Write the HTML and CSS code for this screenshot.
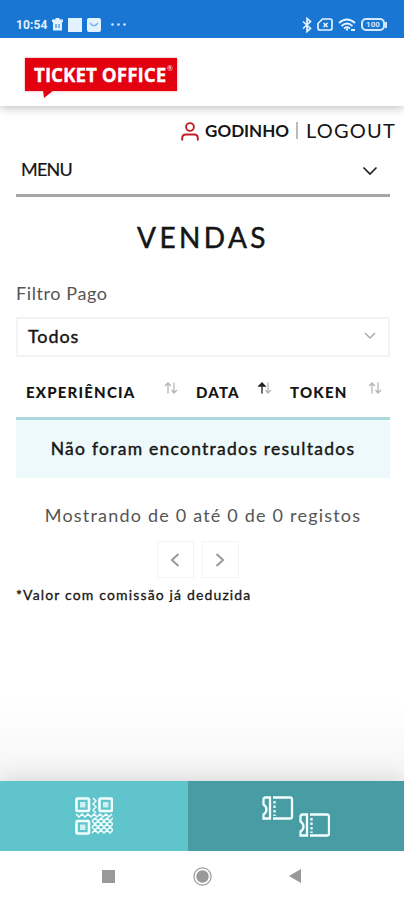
FILE: index.html
```html
<!DOCTYPE html>
<html lang="pt">
<head>
    <meta charset="UTF-8">
    <meta name="viewport" content="width=device-width, initial-scale=1.0">
    <title>Ticket Office - Vendas</title>
    <link rel="stylesheet" href="styles.css">
</head>
<body>
    <div class="status-bar">
        <span class="clock">10:54</span>
        <svg class="trash" width="11" height="13" viewBox="0 0 11 13"><path d="M3.5 0h4v1.5H11V4H0V1.5h3.5z M1 4h9V12.500H1z" fill="#e3f2ff"/><path d="M4 6v4M7 6v4" stroke="#1976d2" stroke-width="1"/></svg>
        <span class="square"></span>
        <svg class="mail" width="14" height="14" viewBox="0 0 14 14"><rect width="14" height="14" rx="2" fill="#e3f2ff"/><path d="M3 5q4 5.500 8 0" fill="none" stroke="#7fb4ec" stroke-width="1.500"/></svg>
        <svg class="dots" width="15" height="3" viewBox="0 0 15 3" fill="#d3e8ff"><circle cx="1.500" cy="1.500" r="1.300"/><circle cx="7.500" cy="1.500" r="1.300"/><circle cx="13.500" cy="1.500" r="1.300"/></svg>
        <div class="status-icons">
            <svg width="10" height="16" viewBox="0 0 10 16" fill="none" stroke="#e3f2ff" stroke-width="1.700"><path d="M1 4.500l7.500 7L5 14.500v-13l3.500 3L1 11.500"/></svg>
            <svg width="16" height="13" viewBox="0 0 16 13" fill="none" stroke="#e3f2ff" stroke-width="1.700"><path d="M5.500 1H13q2 0 2 2v7q0 2-2 2H3q-2 0-2-2V5.500z"/><path d="M6.500 5l4 4M10.500 5l-4 4"/></svg>
            <svg width="18" height="14" viewBox="0 0 18 14" fill="none" stroke="#e3f2ff" stroke-width="1.800"><path d="M1 5q8-7 16 0M3.500 8q5.500-5 11 0M6 10.500q3-2.500 6 0"/><path d="M8 11.500h2M13 12h4"/></svg>
            <div class="battery-wrap">
                <span class="battery">100</span>
                <span class="battery-tip"></span>
            </div>
        </div>
    </div>

    <header class="header">
        <div class="logo">
            <span class="logo-text">TICKET OFFICE</span><span class="reg">®</span>
            <svg class="logo-tail" width="11" height="9" viewBox="0 0 11 9"><path d="M0 0h11L1 8z" fill="#e3000f"/></svg>
        </div>
    </header>

    <main class="content">
        <div class="user">
            <svg class="user-icon" width="18" height="19" viewBox="0 0 18 19" fill="none" stroke="#bf2026" stroke-width="1.900"><circle cx="9" cy="5" r="3.900"/><path d="M1.200 18.500v-2.300q0-3.700 3.700-3.700h8.200q3.700 0 3.700 3.700v2.300"/></svg>
            <span class="user-name">GODINHO</span>
            <span class="divider"></span>
            <span class="logout">LOGOUT</span>
        </div>

        <div class="menu">
            <span>MENU</span>
            <svg width="16" height="10" viewBox="0 0 16 10" fill="none" stroke="#222" stroke-width="1.700"><path d="M1.500 1.500L8 8l6.500-6.500"/></svg>
        </div>

        <h1>VENDAS</h1>

        <div class="filter-label">Filtro Pago</div>
        <div class="select">
            <span>Todos</span>
            <svg width="12" height="8" viewBox="0 0 12 8" fill="none" stroke="#aaa" stroke-width="1.500"><path d="M1 1l5 5 5-5"/></svg>
        </div>

        <div class="table-head">
            <div class="th experience"><span>EXPERIÊNCIA</span>
                <svg class="sort" width="14" height="12" viewBox="0 0 14 12"><path d="M4 11.500V1M1 4l3-3 3 3M10 .500V11M7.500 8l2.500 3L13 8"/></svg>
            </div>
            <div class="th date"><span>DATA</span>
                <svg class="sort" width="14" height="12" viewBox="0 0 14 12"><path class="active" d="M4 11.500V1M1 4l3-3 3 3z"/><path d="M10 .500V11M7.500 8l2.500 3L13 8"/></svg>
            </div>
            <div class="th token"><span>TOKEN</span>
                <svg class="sort" width="14" height="12" viewBox="0 0 14 12"><path d="M4 11.500V1M1 4l3-3 3 3M10 .500V11M7.500 8l2.500 3L13 8"/></svg>
            </div>
        </div>
        <div class="empty">Não foram encontrados resultados</div>

        <div class="info">Mostrando de 0 até 0 de 0 registos</div>
        <div class="pagination">
            <div class="page-btn"><svg width="10" height="14" viewBox="0 0 10 14"><path d="M8.500 1L2 7l6.500 6"/></svg></div>
            <div class="page-btn"><svg width="10" height="14" viewBox="0 0 10 14"><path d="M1.500 1L8 7l-6.500 6"/></svg></div>
        </div>
        <div class="note">*Valor com comissão já deduzida</div>
    </main>

    <nav class="tabs">
        <div class="tab tab-qr">
            <svg width="38" height="38" viewBox="0 0 38 38" fill="none" stroke="#f1ffff">
                <g stroke-width="2.600">
                    <rect x="1.500" y="1.500" width="12.500" height="12.500" rx="1"/>
                    <rect x="24.500" y="1.500" width="12.500" height="12.500" rx="1"/>
                    <rect x="1.500" y="24" width="12.500" height="12.500" rx="1"/>
                </g>
                <g fill="#c9f0f2" stroke="none">
                    <rect x="5" y="5" width="5.500" height="5.500"/>
                    <rect x="28" y="5" width="5.500" height="5.500"/>
                    <rect x="5" y="27.500" width="5.500" height="5.500"/>
                </g>
                <g stroke-width="1.500">
                    <path d="M18 1l3 3-3 3 3 3-3 3 3 3M1 17l3 3 3-3 3 3 3-3 3 3 3-3 3 3 3-3 3 3 3-3 3 3 3-3"/>
                    <path d="M17 24l3-3 3 3 3-3 3 3 3-3 3 3 3-3M17 24l3 3 3-3 3 3 3-3 3 3 3-3 3 3M17 30l3-3 3 3 3-3 3 3 3-3 3 3 3-3M17 30l3 3 3-3 3 3 3-3 3 3 3-3 3 3M17 36l3-3 3 3 3-3 3 3 3-3 3 3 3-3"/>
                </g>
            </svg>
        </div>
        <div class="tab tab-tickets">
            <svg width="68" height="41" viewBox="0 0 68 41" fill="none" stroke="#f1ffff" stroke-width="2.300">
                <g id="ticket">
                    <path d="M2.500 1.500H8v21H1.500v-4q3-2 3-5t-3-5v-5q0-2 2-2zM11 1.500h17q2 0 2 2v17q0 2-2 2H11"/>
                    <path d="M12.500 5v15" stroke-dasharray="2.500 2"/>
                </g>
                <use href="#ticket" x="37" y="17"/>
            </svg>
        </div>
    </nav>

    <div class="android-nav">
        <svg width="13" height="13" viewBox="0 0 13 13"><rect width="13" height="13" fill="#999"/></svg>
        <svg width="19" height="19" viewBox="0 0 19 19"><circle cx="9.500" cy="9.500" r="8.600" fill="none" stroke="#999" stroke-width="1.200"/><circle cx="9.500" cy="9.500" r="6.200" fill="#999"/></svg>
        <svg width="12" height="14" viewBox="0 0 12 14"><path d="M12 0v14L0 7z" fill="#999"/></svg>
    </div>
</body>
</html>
```
FILE: styles.css
```css
* {
    box-sizing: border-box;
}
body {
    margin: 0;
    height: 900px;
    display: flex;
    flex-direction: column;
    overflow: hidden;
    background: #fff;
    color: #151515;
    font-family: Lato, "Open Sans", sans-serif;
}
svg {
    display: block;
    flex: none;
}

/* status bar */
.status-bar {
    position: relative;
    z-index: 2;
    height: 38px;
    flex: none;
    display: flex;
    align-items: center;
    padding: 11px 17px 0 16px;
    background: #1976d2;
}
.clock {
    width: 36px;
    color: #e3f2ff;
    font: bold 12px Roboto, sans-serif;
    letter-spacing: 0.1px;
}
.square {
    width: 14px;
    height: 14px;
    margin: 0 5px 0 5px;
    background: #e3f2ff;
}
.dots {
    margin-left: 10px;
}
.status-icons {
    display: flex;
    align-items: center;
    gap: 5px;
    margin-left: auto;
}
.battery-wrap {
    display: flex;
    align-items: center;
}
.battery {
    width: 24px;
    height: 13px;
    border: 2px solid #d3e8ff;
    border-radius: 5px;
    color: #d3e8ff;
    font: bold 8px/9px Roboto, sans-serif;
    text-align: center;
}
.battery-tip {
    width: 2px;
    height: 6px;
    background: #d3e8ff;
}

/* header */
.header {
    position: relative;
    z-index: 1;
    height: 68px;
    flex: none;
    padding: 20px 0 0 25px;
    background: #fff;
    box-shadow: 0 1px 10px rgba(0, 0, 0, 0.3);
}
.logo {
    position: relative;
    display: flex;
    width: 152px;
    height: 33px;
    padding-left: 9px;
    background: #e3000f;
    box-shadow: 0 0 2px rgba(227, 0, 15, 0.5);
    color: #fff;
}
.logo-text {
    font: bold 20px/34px "Open Sans", sans-serif;
    white-space: nowrap;
    transform: scaleX(0.94);
    transform-origin: left;
    width: 133px;
    -webkit-text-stroke: 0.300px #fff;
}
.reg {
    font-size: 7px;
    line-height: 20px;
}
.logo-tail {
    position: absolute;
    left: 18px;
    top: 32px;
}

/* content */
.content {
    flex: 1;
    padding: 0 14px 0 16px;
    background: linear-gradient(#fff 88%, #f5f5f5);
}
.user {
    height: 49px;
    display: flex;
    align-items: center;
    justify-content: flex-end;
    margin-right: -7px;
    white-space: nowrap;
}
.user-icon {
    margin: 2px 6px 0 0;
}
.user-name {
    width: 84px;
    font-size: 17px;
    font-weight: bold;
}
.divider {
    width: 2px;
    height: 17px;
    margin: 0 8px 0 7px;
    background: #bbb;
}
.logout {
    margin: -2px 1px 0 0;
    font-size: 20px;
    letter-spacing: 1.2px;
}
.menu {
    height: 42px;
    display: flex;
    justify-content: space-between;
    padding: 3px 12px 0 5px;
    border-bottom: 3px solid #a6a6a6;
    font-size: 18px;
    line-height: 22px;
    letter-spacing: -0.8px;
    -webkit-text-stroke: 0.200px #151515;
}
.menu svg {
    margin-top: 8px;
}
h1 {
    margin: 22px 0 0;
    font-size: 28px;
    font-weight: normal;
    line-height: 36px;
    letter-spacing: 3.400px;
    text-align: center;
    -webkit-text-stroke: 0.500px #151515;
}
.filter-label {
    margin-top: 26px;
    height: 36px;
    color: #555;
    font-size: 18px;
    line-height: 24px;
    letter-spacing: 0.6px;
}
.select {
    height: 40px;
    display: flex;
    align-items: center;
    justify-content: space-between;
    padding: 0 12px 2px 10px;
    border: 2px solid #f3f3f3;
    font-size: 18px;
    letter-spacing: 0.9px;
    -webkit-text-stroke: 0.400px #151515;
}
.table-head {
    height: 63px;
    display: grid;
    grid-template-columns: 170px 94px 110px;
    border-bottom: 3px solid #a9d9dc;
}
.th {
    display: flex;
    justify-content: space-between;
    padding: 25px 8px 0 10px;
    font-size: 15px;
    font-weight: 900;
    line-height: 21px;
    letter-spacing: 1.2px;
}
.sort {
    fill: none;
    stroke: #b5b5b5;
    stroke-width: 1.300;
}
.sort .active {
    stroke: #222;
    fill: #222;
}
.empty {
    height: 58px;
    background: #edf9fa;
    font-size: 17.5px;
    line-height: 57px;
    letter-spacing: 1.25px;
    text-align: center;
    white-space: nowrap;
    -webkit-text-stroke: 0.400px #151515;
}
.info {
    margin-top: 25px;
    color: #555;
    font-size: 18px;
    line-height: 24px;
    letter-spacing: 1.2px;
    text-align: center;
    white-space: nowrap;
}
.pagination {
    display: flex;
    justify-content: center;
    gap: 8px;
    margin: 14px 11px 0 0;
}
.page-btn {
    width: 37px;
    height: 37px;
    display: flex;
    align-items: center;
    justify-content: center;
    border: 1px solid #f4f4f4;
}
.page-btn path {
    fill: none;
    stroke: #999;
    stroke-width: 2;
}
.note {
    margin-top: 7px;
    font-size: 14px;
    line-height: 20px;
    letter-spacing: 1.15px;
    white-space: nowrap;
    -webkit-text-stroke: 0.300px #151515;
}

/* bottom bar */
.tabs {
    height: 70px;
    flex: none;
    display: flex;
    box-shadow: 0 -2px 24px rgba(0, 0, 0, 0.13);
}
.tab {
    display: flex;
    align-items: center;
    justify-content: center;
}
.tab-qr {
    width: 188px;
    background: #60c4cc;
}
.tab-tickets {
    flex: 1;
    background: #489da5;
}
.android-nav {
    position: relative;
    height: 49px;
    flex: none;
    display: flex;
    align-items: center;
    justify-content: space-between;
    padding: 1px 103px 0 102px;
    background: #fff;
}
```
